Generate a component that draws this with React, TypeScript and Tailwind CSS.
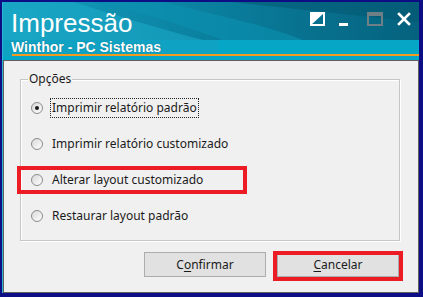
import React from 'react';

const uiFont = "font-['Segoe_UI','Noto_Sans',sans-serif]";

function Radio({ checked }: { checked?: boolean }) {
  return (
    <span className="flex h-[12px] w-[12px] shrink-0 items-center justify-center rounded-full border border-[#8b8b8b] bg-gradient-to-br from-[#d8d8d8] to-[#ffffff]">
      {checked && <span className="h-[4px] w-[4px] rounded-full bg-[#1a1a1a]" />}
    </span>
  );
}

function WindowButtons() {
  return (
    <div className="flex items-start gap-0 pt-[10px]">
      {/* detach / restore icon */}
      <svg width="15" height="14" viewBox="0 0 15 14" className="mr-[14px]">
        <rect x="1" y="1" width="13" height="12" fill="none" stroke="#fff" strokeWidth="2" />
        <polygon points="1,1 14,1 1,13" fill="#fff" />
      </svg>
      {/* minimize */}
      <svg width="10" height="14" viewBox="0 0 10 14" className="mr-[18px]">
        <rect x="0" y="11" width="9" height="3" fill="#fff" />
      </svg>
      {/* maximize (disabled) */}
      <svg width="16" height="14" viewBox="0 0 16 14" className="mr-[14px]">
        <rect x="1" y="1" width="14" height="12" fill="none" stroke="#6f7f86" strokeWidth="2" />
        <rect x="1" y="1" width="14" height="3" fill="#6f7f86" />
      </svg>
      {/* close */}
      <svg width="14" height="14" viewBox="0 0 14 14">
        <path d="M2 2 L12 12 M12 2 L2 12" stroke="#fff" strokeWidth="2.6" strokeLinecap="square" />
      </svg>
    </div>
  );
}

export default function App() {
  const options = [
    'Imprimir relatório padrão',
    'Imprimir relatório customizado',
    'Alterar layout customizado',
    'Restaurar layout padrão',
  ];

  return (
    <div className="flex h-[297px] w-[423px] flex-col bg-[#0d0d86] pb-[4px] pl-[2px] pr-[4px] pt-[2px]">
      <div className="flex flex-1 flex-col border-l border-[#2bb6d4] bg-[#0aa3c3]">
        {/* Title bar */}
        <div className="relative h-[58px] overflow-hidden bg-gradient-to-r from-[#15a0c0] via-[#0a7f9e] to-[#05627e]">
          <svg className="absolute inset-0" width="417" height="58" viewBox="0 0 417 58" preserveAspectRatio="none">
            <path d="M0 0 L70 0 C110 12 150 25 200 38 L0 38 Z" fill="#1eaccb" opacity="0.55" />
            <path d="M90 0 L160 0 C200 10 260 22 300 38 L220 38 C180 24 140 10 90 0 Z" fill="#0c91b1" opacity="0.6" />
            <path d="M230 0 L417 0 L417 20 C360 14 300 8 230 0 Z" fill="#045670" opacity="0.5" />
            <rect x="0" y="38" width="417" height="20" fill="#06a6c6" />
            <rect x="0" y="38" width="215" height="16" fill="#0fa2c2" />
          </svg>
          <div className="relative flex flex-col">
            <div className="flex items-start justify-between pr-[8px]">
              <div className="pl-[8px] pt-[6px] font-['Liberation_Sans',Arial,sans-serif] text-[26px] leading-[30px] text-white">
                Impressão
              </div>
              <WindowButtons />
            </div>
            <div className="mt-[1px] pl-[8px] font-['Liberation_Sans',Arial,sans-serif] text-[14px] font-bold leading-[16px] text-white [text-shadow:0_0_1px_rgba(0,60,90,0.6)]">
              Winthor - PC Sistemas
            </div>
            <div className="ml-[9px] mt-[-1px] h-[2px] bg-[#f49a1c]" />
          </div>
        </div>

        {/* Body */}
        <div className={`flex flex-1 flex-col border border-[#5f5f5f] bg-[#f0f0f0] ${uiFont} text-[12px] text-[#1b1b1b]`}>
          <div className="relative ml-[16px] mt-[18px] h-[162px] w-[380px] border border-[#c6c6c6] shadow-[inset_1px_1px_0_#ffffff,1px_1px_0_#ffffff]">
            <span className="absolute left-[7px] top-[-9px] bg-[#f0f0f0] px-[1px] leading-[16px]">Opções</span>
            <div className="flex flex-col gap-[16px] pt-[18px]">
              {options.map((label, i) => (
                <div key={label} className="relative flex h-[20px] items-center pl-[10px]">
                  <Radio checked={i === 0} />
                  <span
                    className={`ml-[7px] flex h-[20px] items-center border px-[1px] leading-[16px] ${
                      i === 0 ? 'border-dotted border-[#222]' : 'border-transparent'
                    }`}
                  >
                    {label}
                  </span>
                  {i === 2 && (
                    <div className="pointer-events-none absolute left-[-4px] top-[-4px] h-[28px] w-[230px] border-[4px] border-[#ec1c24]" />
                  )}
                </div>
              ))}
            </div>
          </div>

          <div className="ml-[140px] mt-[11px] flex gap-[11px]">
            <button className="flex h-[25px] w-[122px] items-center justify-center border border-[#adadad] bg-[#e1e1e1] leading-[16px]">
              C<span className="underline underline-offset-2">o</span>nfirmar
            </button>
            <div className="relative">
              <button className="flex h-[25px] w-[122px] items-center justify-center border border-[#adadad] bg-[#e1e1e1] leading-[16px]">
                <span className="underline underline-offset-2">C</span>ancelar
              </button>
              <div className="pointer-events-none absolute -bottom-[4px] -left-[4px] -right-[4px] -top-[1px] border-[4px] border-[#ec1c24]" />
            </div>
          </div>
        </div>
      </div>
    </div>
  );
}
